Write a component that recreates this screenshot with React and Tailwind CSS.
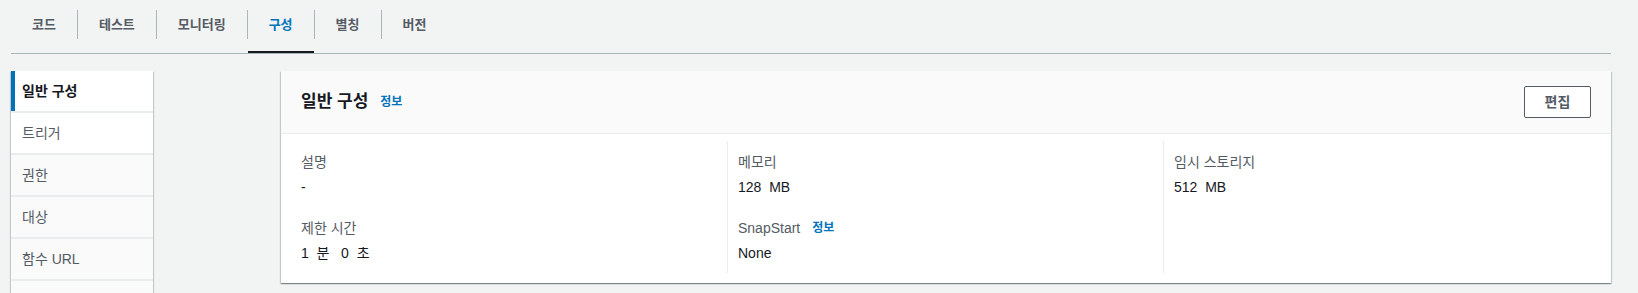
import React from 'react';

const tabs = ['코드', '테스트', '모니터링', '구성', '별칭', '버전'];
const navItems = ['일반 구성', '트리거', '권한', '대상', '함수 URL', '환경 변수', '태그', 'VPC'];

const font = { fontFamily: '"Liberation Sans", "Noto Sans CJK KR", sans-serif' };

const Field = ({ label, value, info, className = '' }) => (
    <div className={className}>
        <div className="flex items-center gap-[12px] text-[14px] leading-[22px] text-[#545b64]">
            <span>{label}</span>
            {info && <span className="text-[12px] font-bold text-[#0073bb]">정보</span>}
        </div>
        <div className="mt-[3px] text-[14px] leading-[22px] text-[#16191f]">{value}</div>
    </div>
);

export default function App() {
    return (
        <div style={font} className="min-h-screen bg-[#f2f3f3] pb-10">
            {/* Tabs */}
            <div className="ml-[11px] mr-[27px] flex border-b border-[#aab7b8]">
                {tabs.map((tab, i) => (
                    <React.Fragment key={tab}>
                        {i > 0 && <div className="mt-[10px] h-[29px] w-px bg-[#aab7b8]" />}
                        <div className="relative flex h-[53px] items-center px-[21px] pb-[3px]">
                            <span className={`text-[13px] font-bold ${tab === '구성' ? 'text-[#0073bb]' : 'text-[#545b64]'}`}>
                                {tab}
                            </span>
                            {tab === '구성' && (
                                <div className="absolute bottom-0 left-0 right-0 h-[2px] bg-[#16191f]" />
                            )}
                        </div>
                    </React.Fragment>
                ))}
            </div>

            <div className="ml-[11px] mr-[27px] mt-[17px] flex items-start gap-[128px]">
                {/* Side nav */}
                <div className="w-[142px] shrink-0 bg-[#eaeded] shadow-[0_1px_1px_0_rgba(0,28,36,0.3),1px_1px_1px_0_rgba(0,28,36,0.15),-1px_1px_1px_0_rgba(0,28,36,0.15)]">
                    {navItems.map((item, i) => (
                        <div
                            key={item}
                            className={`flex h-[40px] items-center text-[14px] ${i > 0 ? 'mt-[2px]' : ''} ${
                                i === 0
                                    ? 'border-l-[4px] border-[#0073bb] bg-white pl-[7px] font-bold text-[#16191f]'
                                    : i === 1
                                    ? 'bg-white pl-[11px] text-[#545b64]'
                                    : 'bg-[#fafafa] pl-[11px] text-[#545b64]'
                            }`}
                        >
                            {item}
                        </div>
                    ))}
                </div>

                {/* Panel */}
                <div className="flex-1 bg-white shadow-[0_1px_1px_0_rgba(0,28,36,0.3),1px_1px_1px_0_rgba(0,28,36,0.15),-1px_1px_1px_0_rgba(0,28,36,0.15)]">
                    <div className="flex h-[63px] items-center justify-between border-b border-[#eaeded] bg-[#fafafa] pl-[20px] pr-[20px]">
                        <div className="flex items-center gap-[12px]">
                            <h2 className="text-[17px] font-bold text-[#16191f]">일반 구성</h2>
                            <span className="text-[12px] font-bold text-[#0073bb]">정보</span>
                        </div>
                        <button className="h-[32px] w-[67px] rounded-[2px] border border-[#545b64] bg-white text-[14px] font-bold text-[#545b64]">
                            편집
                        </button>
                    </div>
                    <div className="grid grid-cols-[436px_436px_1fr] px-[10px] pb-[10px] pt-[7px]">
                        <div className="flex flex-col gap-[19px] pl-[10px] pt-[10px] pb-[9px]">
                            <Field label="설명" value="-" />
                            <Field label="제한 시간" value={'1\u00a0 분\u00a0\u00a0 0\u00a0 초'} />
                        </div>
                        <div className="flex flex-col gap-[19px] border-l border-[#eaeded] pl-[10px] pt-[10px] pb-[9px]">
                            <Field label="메모리" value={'128\u00a0 MB'} />
                            <Field label="SnapStart" value="None" info />
                        </div>
                        <div className="flex flex-col gap-[19px] border-l border-[#eaeded] pl-[10px] pt-[10px] pb-[9px]">
                            <Field label="임시 스토리지" value={'512\u00a0 MB'} />
                        </div>
                    </div>
                </div>
            </div>
        </div>
    );
}
